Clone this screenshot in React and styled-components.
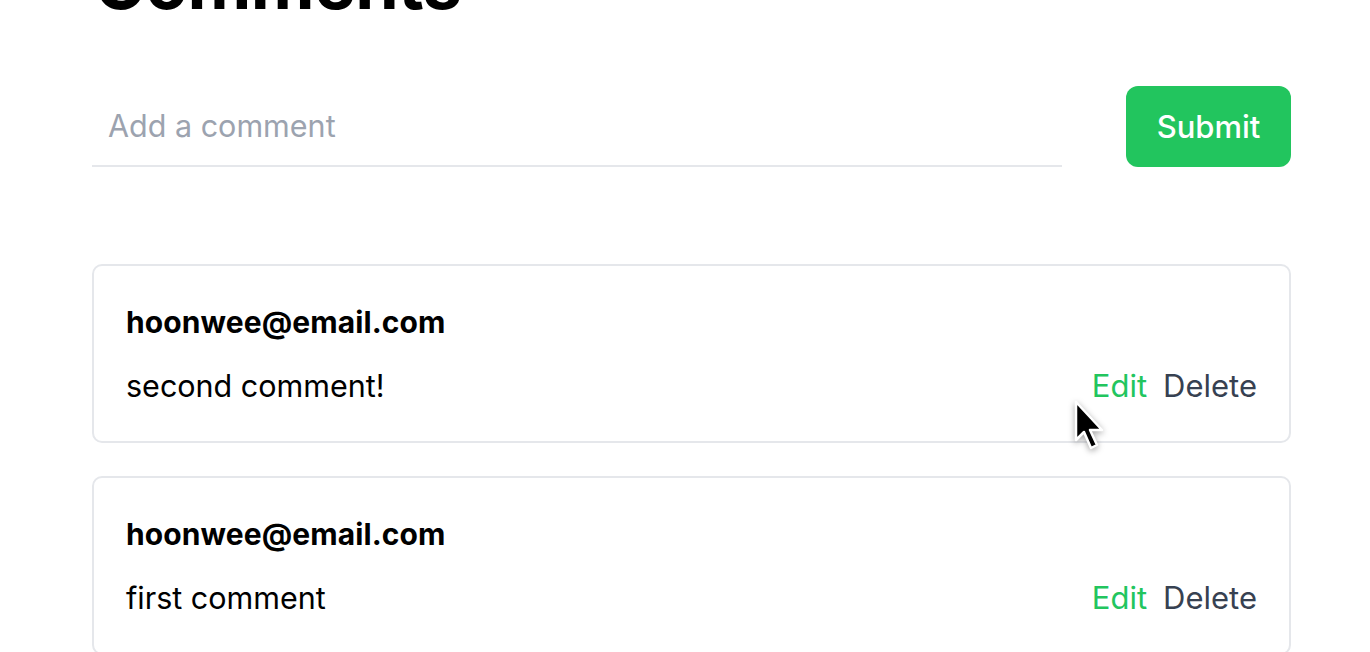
import styled, { createGlobalStyle } from 'styled-components'

const GlobalStyle = createGlobalStyle`
  html, body {
    margin: 0;
    padding: 0;
    background: #ffffff;
    overflow: hidden;
  }
  body {
    font-family: Inter, 'Noto Sans', 'Liberation Sans', sans-serif;
    color: #000000;
  }
`

const Page = styled.main`
  width: 1199px;
  margin-left: 92px;
  position: relative;
`

const Title = styled.h1`
  margin: -51px 0 67px 2px;
  font-size: 70px;
  line-height: 1;
  font-weight: 700;
  letter-spacing: -0.6px;
`

const CommentForm = styled.form`
  display: flex;
  align-items: stretch;
  gap: 64px;
  margin-bottom: 97px;
`

const CommentInput = styled.input`
  flex: 1;
  height: 81px;
  box-sizing: border-box;
  border: none;
  border-bottom: 2px solid #e5e7eb;
  padding: 0 16px;
  font-family: inherit;
  font-size: 30.5px;
  color: #111827;
  outline: none;
  background: transparent;

  &::placeholder {
    color: #9ca3af;
  }
`

const SubmitButton = styled.button`
  width: 165px;
  height: 81px;
  border: none;
  border-radius: 12px;
  background: #22c55e;
  color: #ffffff;
  font-family: inherit;
  font-size: 31px;
  font-weight: 500;
  cursor: pointer;
`

const CommentList = styled.ul`
  list-style: none;
  margin: 0;
  padding: 0;
  display: flex;
  flex-direction: column;
  gap: 33px;
`

const Card = styled.li`
  border: 2px solid #e5e7eb;
  border-radius: 10px;
  padding: 38px 32px 37px;
  display: flex;
  flex-direction: column;
  gap: 28px;
`

const Author = styled.div`
  font-size: 30px;
  font-weight: 660;
  line-height: 36px;
  letter-spacing: 0.1px;
`

const Row = styled.div`
  display: flex;
  justify-content: space-between;
  align-items: center;
  height: 36px;
`

const Body = styled.p`
  margin: 0;
  font-size: 30.5px;
  line-height: 36px;
`

const Actions = styled.div`
  display: flex;
  gap: 16px;
`

const ActionButton = styled.button`
  border: none;
  background: none;
  padding: 0;
  font-family: inherit;
  font-size: 31px;
  line-height: 36px;
  color: ${props => (props.$primary ? '#22c55e' : '#374151')};
  cursor: pointer;
`

const Pointer = styled.svg`
  position: absolute;
  left: 982px;
  top: 451px;
  width: 32px;
  height: 52px;
  pointer-events: none;
  filter: drop-shadow(0 2px 3px rgba(0, 0, 0, 0.35));
`

const comments = [
  { id: 2, author: 'hoonwee@email.com', text: 'second comment!' },
  { id: 1, author: 'hoonwee@email.com', text: 'first comment' },
]

function App() {
  return (
    <>
      <GlobalStyle />
      <Page>
        <Title>Comments</Title>
        <CommentForm onSubmit={e => e.preventDefault()}>
          <CommentInput placeholder="Add a comment" />
          <SubmitButton type="submit">Submit</SubmitButton>
        </CommentForm>
        <CommentList>
          {comments.map(c => (
            <Card key={c.id}>
              <Author>{c.author}</Author>
              <Row>
                <Body>{c.text}</Body>
                <Actions>
                  <ActionButton $primary>Edit</ActionButton>
                  <ActionButton>Delete</ActionButton>
                </Actions>
              </Row>
            </Card>
          ))}
        </CommentList>
        <Pointer viewBox="0 0 32 52">
          <path
            d="M2 2 L2 40 L10 32 L17 48 L23 45 L16 30 L28 30 Z"
            fill="#000"
            stroke="#fff"
            strokeWidth="2.5"
            strokeLinejoin="round"
          />
        </Pointer>
      </Page>
    </>
  )
}

export default App
